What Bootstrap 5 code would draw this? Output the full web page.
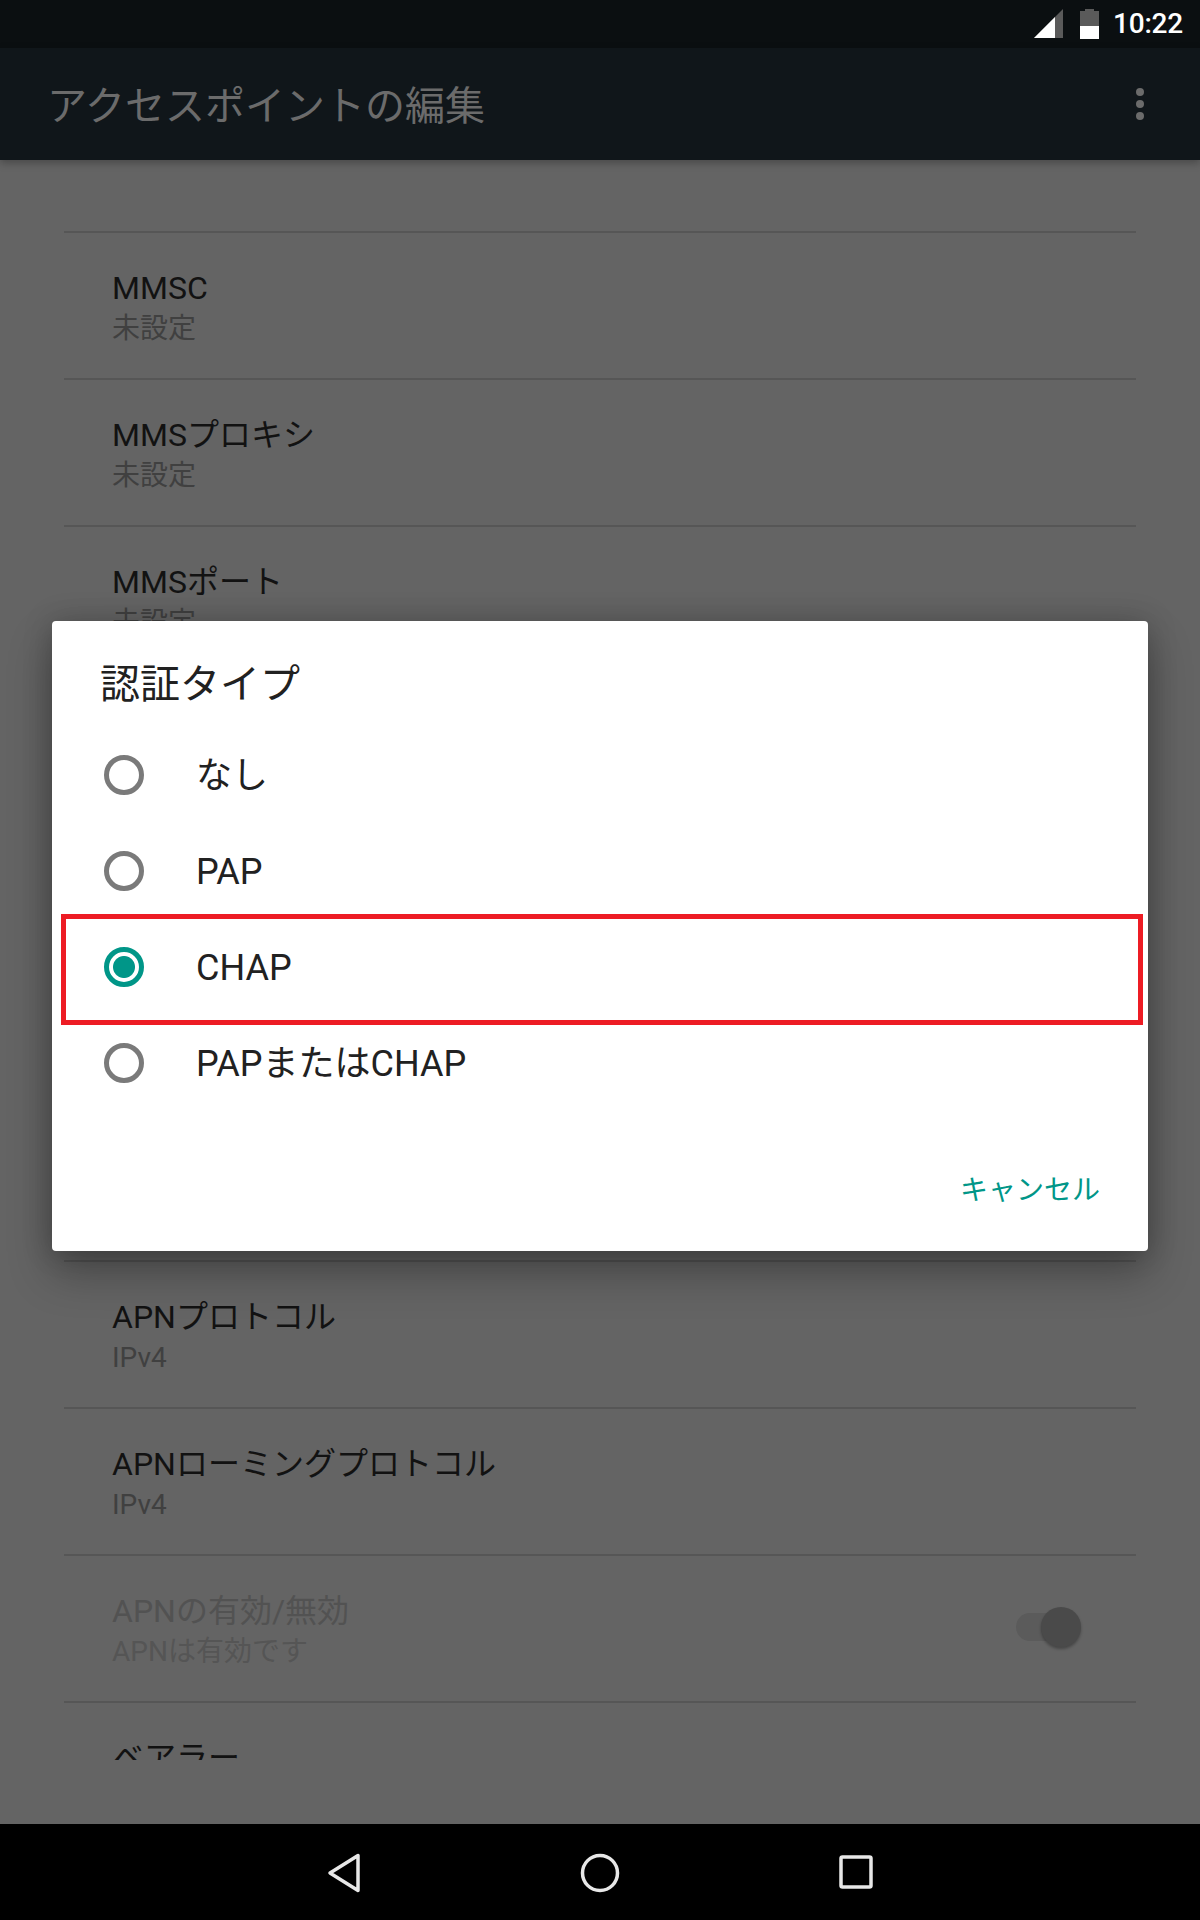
<!DOCTYPE html>
<html lang="ja">
<head>
<meta charset="utf-8">
<title>アクセスポイントの編集</title>
<link href="https://cdn.jsdelivr.net/npm/bootstrap@5.3.0/dist/css/bootstrap.min.css" rel="stylesheet">
<style>
html,body{margin:0;padding:0;background:#646464}
body{font-family:Roboto,"Noto Sans CJK JP",sans-serif}
.screen{width:1200px;height:1920px;overflow:hidden}
.status-strip{height:48px;background:#0b0f11;color:#fff;padding-right:17px}
.status-strip .clock{font-size:28px;line-height:48px;font-weight:500;margin-left:14px;letter-spacing:-.2px}
.status-strip .batt{margin-left:16px}
.app-strip{height:112px;background:#10161a;padding-left:47px;padding-right:56px;box-shadow:0 3px 8px rgba(0,0,0,.28);position:relative;z-index:1}
.app-title{font-size:40px;line-height:48px;color:#6b6b6b;margin-top:5px}
.main-area{height:1664px;background:#646464}
.pref-clip{height:1600px;overflow:hidden;padding:71px 64px 0}
.pref-list{--bs-list-group-bg:transparent;--bs-list-group-border-color:#565656;--bs-list-group-border-width:2px}
.pref-row{height:147px;padding:35px 55px 0 48px;background:transparent;border-top:2px solid #565656!important;border-bottom:0}
.pref-name{font-size:32px;line-height:40px;color:#121212}
.pref-val{font-size:28px;line-height:38px;color:#404040;margin-top:2px}
.pref-off .pref-name{color:#525252}
.pref-off .pref-val{color:#555}
.sw-wrap{width:65px;height:40px;margin-top:16px}
.sw-track{left:0;right:11px;top:6px;height:28px;border-radius:14px;background:#5b5b5b}
.sw-thumb{right:0;top:0;width:40px;height:40px;border-radius:50%;background:#4a4a4a;box-shadow:0 2px 3px rgba(0,0,0,.3)}
.auth-dialog{left:52px;top:461px;width:1096px;height:630px;border:0;border-radius:4px;background:#fff;box-shadow:0 22px 44px rgba(0,0,0,.3),0 0 30px rgba(0,0,0,.2)}
.auth-title{font-size:40px;line-height:48px;color:#212121;padding:40px 48px 18px}
.auth-opt{height:96px;padding-left:52px;gap:52px}
.auth-opt label{font-size:36px;line-height:48px;color:#212121;padding-top:2px}
input.form-check-input.auth-radio,input.form-check-input.auth-radio:checked{flex:none;width:40px;height:40px;margin:0;border:5px solid #7a7a7a;border-radius:50%;background:#fff;box-shadow:none;float:none}
input.form-check-input.auth-radio:checked{border-color:#009688;background-image:radial-gradient(circle,#009688 0,#009688 10.5px,#fff 11.5px)}
.red-frame{left:9px;right:5px;top:-5px;height:111px;border:5px solid #ed1c24;pointer-events:none}
.auth-actions{padding:62px 48px 0 0}
.auth-cancel{font-size:28px;line-height:36px;color:#009688;padding:0;border:0;background:none;text-decoration:none}
.nav-strip{height:96px;background:#000;padding:29px 0 0 0}
.nav-strip svg{display:block}
.nav-back{margin-left:327px}
.nav-home{margin-left:219px}
.nav-recent{margin-left:219px;margin-top:2px}
</style>
</head>
<body>
<div class="screen d-flex flex-column">
  <div class="status-strip d-flex justify-content-end align-items-center">
    <svg width="30" height="30" viewBox="0 0 30 30" aria-hidden="true"><path d="M0 29 29 0V29Z" fill="#5a5a5a"/><path d="M0 29 21 8V29Z" fill="#fff"/></svg>
    <svg class="batt" width="19" height="30" viewBox="0 0 19 30" aria-hidden="true"><path d="M5 0h9v2h5v28H0V2h5Z" fill="#5a5a5a"/><rect y="17" width="19" height="13" fill="#fff"/></svg>
    <span class="clock">10:22</span>
  </div>
  <div class="app-strip d-flex justify-content-between align-items-center">
    <div class="app-title">アクセスポイントの編集</div>
    <svg width="8" height="32" viewBox="0 0 8 32" aria-hidden="true"><circle cx="4" cy="4" r="4" fill="#6b6b6b"/><circle cx="4" cy="16" r="4" fill="#6b6b6b"/><circle cx="4" cy="28" r="4" fill="#6b6b6b"/></svg>
  </div>
  <div class="main-area position-relative">
    <div class="pref-clip">
      <div class="list-group list-group-flush pref-list">
        <div class="list-group-item pref-row"><div class="pref-name">MMSC</div><div class="pref-val">未設定</div></div>
        <div class="list-group-item pref-row"><div class="pref-name">MMSプロキシ</div><div class="pref-val">未設定</div></div>
        <div class="list-group-item pref-row"><div class="pref-name">MMSポート</div><div class="pref-val">未設定</div></div>
        <div class="list-group-item pref-row"></div>
        <div class="list-group-item pref-row"></div>
        <div class="list-group-item pref-row"></div>
        <div class="list-group-item pref-row"></div>
        <div class="list-group-item pref-row"><div class="pref-name">APNプロトコル</div><div class="pref-val">IPv4</div></div>
        <div class="list-group-item pref-row"><div class="pref-name">APNローミングプロトコル</div><div class="pref-val">IPv4</div></div>
        <div class="list-group-item pref-row pref-off d-flex justify-content-between">
          <div><div class="pref-name">APNの有効/無効</div><div class="pref-val">APNは有効です</div></div>
          <div class="sw-wrap position-relative"><div class="sw-track position-absolute"></div><div class="sw-thumb position-absolute"></div></div>
        </div>
        <div class="list-group-item pref-row"><div class="pref-name">ベアラー</div></div>
      </div>
    </div>
    <div class="card auth-dialog position-absolute">
      <div class="auth-title">認証タイプ</div>
      <div class="form-check auth-opt d-flex align-items-center m-0">
        <input class="form-check-input auth-radio" type="radio" name="auth" id="a1"><label for="a1">なし</label>
      </div>
      <div class="form-check auth-opt d-flex align-items-center m-0">
        <input class="form-check-input auth-radio" type="radio" name="auth" id="a2"><label for="a2">PAP</label>
      </div>
      <div class="form-check auth-opt d-flex align-items-center m-0 position-relative">
        <input class="form-check-input auth-radio" type="radio" name="auth" id="a3" checked><label for="a3">CHAP</label>
        <div class="red-frame position-absolute"></div>
      </div>
      <div class="form-check auth-opt d-flex align-items-center m-0">
        <input class="form-check-input auth-radio" type="radio" name="auth" id="a4"><label for="a4">PAPまたはCHAP</label>
      </div>
      <div class="auth-actions d-flex justify-content-end">
        <button type="button" class="btn auth-cancel">キャンセル</button>
      </div>
    </div>
  </div>
  <div class="nav-strip d-flex align-items-start">
    <svg class="nav-back" width="34" height="40" viewBox="0 0 34 40" aria-hidden="true"><path d="M31 2.5V37.5L3 20Z" fill="none" stroke="#e8e8e8" stroke-width="3.5" stroke-linejoin="round"/></svg>
    <svg class="nav-home" width="40" height="40" viewBox="0 0 40 40" aria-hidden="true"><circle cx="20" cy="20" r="17.5" fill="none" stroke="#e8e8e8" stroke-width="3.5"/></svg>
    <svg class="nav-recent" width="34" height="34" viewBox="0 0 34 34" aria-hidden="true"><rect x="2" y="2" width="30" height="30" rx="1.5" fill="none" stroke="#e8e8e8" stroke-width="3.5"/></svg>
  </div>
</div>
<script src="https://cdn.jsdelivr.net/npm/bootstrap@5.3.0/dist/js/bootstrap.bundle.min.js"></script>
</body>
</html>
